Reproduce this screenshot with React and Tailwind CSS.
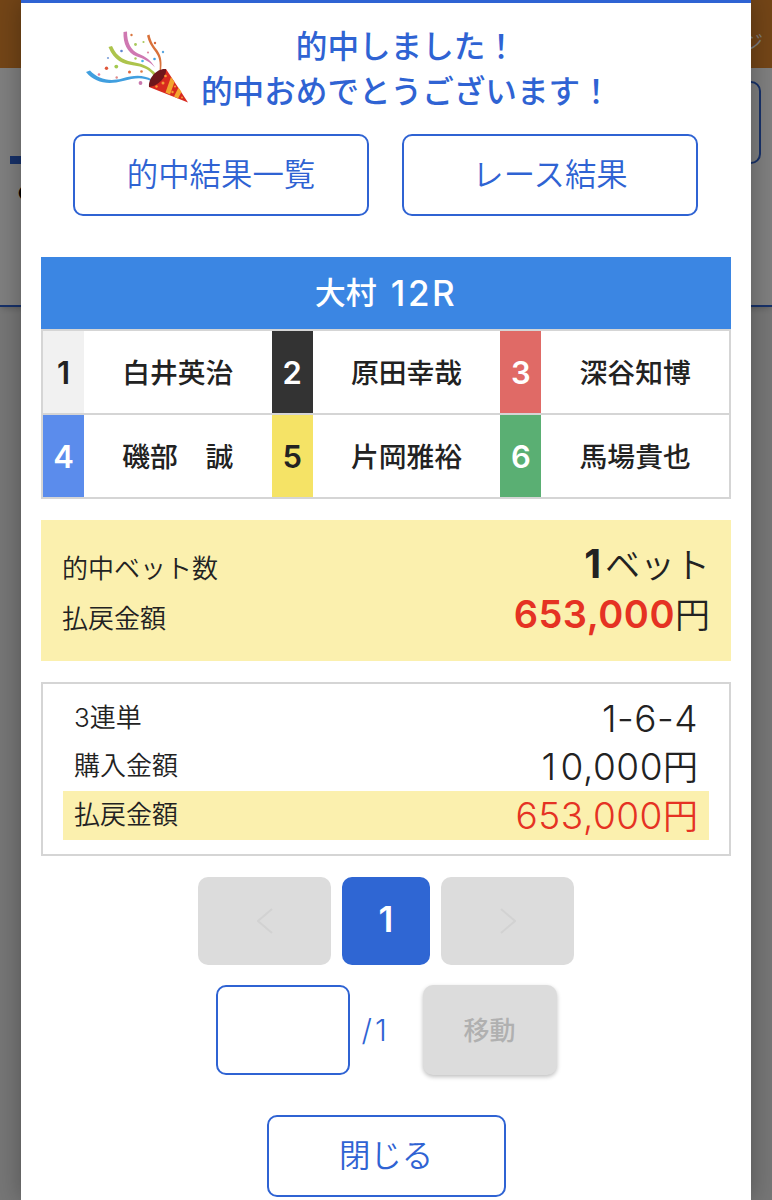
import React from "react";

const racers = [
  { no: 1, name: "白井英治", color: "bg-[#f1f1f1] text-[#222]" },
  { no: 2, name: "原田幸哉", color: "bg-[#333] text-white" },
  { no: 3, name: "深谷知博", color: "bg-[#e06a66] text-white" },
  { no: 4, name: "磯部　誠", color: "bg-[#5b8cec] text-white" },
  { no: 5, name: "片岡雅裕", color: "bg-[#f5e366] text-[#222]" },
  { no: 6, name: "馬場貴也", color: "bg-[#5aaf73] text-white" },
];

const confetti = [
  [51.5, 10, "#d9763f", 1.2],
  [55.5, 19.5, "#a9c95c", 1.4],
  [63.5, 17, "#a9c95c", 1.1],
  [75, 18, "#d8693f", 1.2],
  [41.5, 26, "#5f86d0", 1.3],
  [28, 33, "#7fa0da", 1.1],
  [68, 27.5, "#e08aa0", 1.1],
  [83, 27, "#5aa7e0", 1.2],
  [55.5, 33.5, "#a9c95c", 1.2],
  [62.5, 36, "#45b4ea", 1.3],
  [74.5, 34, "#45a0e0", 1.3],
  [26.5, 43.3, "#e0563a", 1.7],
  [36.3, 41.6, "#a3c94f", 1.9],
  [19, 49.5, "#e77f96", 1.3],
  [49.5, 47, "#e0663c", 1.5],
  [61.5, 46.5, "#dd7a45", 1.3],
  [36.7, 52.5, "#e08a8a", 1.2],
  [60.5, 58, "#c878ad", 1.9],
];

const Cracker = () => (
  <svg viewBox="0 0 115 85" className="h-[85px] w-[115px] shrink-0" fill="none">
    <path d="M6 47 L10 45.5 C18 54 29 57 42 53.5 C54 50 63 49.5 72 54.5 L71 56 C62 51.5 54 53 43 56 C28 60 15 58 6 47Z" fill="#419fdf" />
    <path d="M28.5 22 L32 21 C37 33 46 36 55 37.5 C64 39 71 43 76 49 L74 51 C69 44 62 41.5 54 40.5 C43 39 34 36 28.5 22Z" fill="#adc44c" />
    <path d="M43.5 7 L47 6.5 C47 18 51 25 58 28.5 C66 32 71 35 75 42.5 C70 37 65 34 57 31.5 C47 28 43 18 43.5 7Z" fill="#cf78b1" />
    <path d="M67 10.5 L69.5 9.5 C71 17 74 21 77.5 25.5 C82 32 82 38 81 46 L79.5 46 C80.5 37 79 32 75.5 27 C71 21 68.5 17 67 10.5Z" fill="#d8713a" />
    <path d="M69 62 C70 53 77 45 86 44 L108 77.5 Z" fill="#d8291f" />
    <path d="M85.5 67.5 L91 52 L94.5 57 L90 69.5Z M94 71.5 L98.5 62.5 L101.5 67 L98 73.5Z" fill="#f3a52f" />
    <path d="M69 62 C68 53 77 43 86 44 C87 52 78 61 69 62Z" fill="#6f151b" />
    <g fill="#f59a35">
      <circle cx="85.5" cy="51" r="1.3" />
      <circle cx="83" cy="58" r="1.5" />
      <circle cx="76.5" cy="61.5" r="1.2" />
      <circle cx="95" cy="61.5" r="1.1" />
      <circle cx="92.5" cy="67" r="1.2" />
      <circle cx="102" cy="72.5" r="1" />
    </g>
    {confetti.map(([x, y, color, r], index) => (
      <circle key={index} cx={x} cy={y} r={r} fill={color} />
    ))}
  </svg>
);

const Racer = ({ no, name, color }) => (
  <div className="flex border-b-2 border-[#d5d5d5] text-[27.8px] font-medium">
    <div className={`flex w-[41px] shrink-0 items-center justify-center pt-0.5 text-[31px] font-semibold ${color}`}>
      {no}
    </div>
    <div className="flex flex-1 items-center justify-center pt-1">{name}</div>
  </div>
);

const DetailRow = ({ label, className = "", children }) => (
  <div className={`flex h-[48.5px] items-center justify-between px-[11px] ${className}`}>
    <span className="pb-0.5 text-[26px] text-[#222]">{label}</span>
    <span className="text-[37px] leading-none tracking-[0.5px]">{children}</span>
  </div>
);

const Yen = () => <span className="text-[35px] tracking-normal">円</span>;

// Page that stays visible on both sides of the dialog
const Background = () => (
  <div className="h-full bg-[#ededed]">
    <div className="flex h-[68px] items-center justify-end bg-[#e68a2e] pt-[18px] pr-[9px] text-[20px] text-white">
      <span>マイページ</span>
    </div>
    <div className="h-[239px] border-b-2 border-[#2f63d3] bg-white pt-[13px] shadow-md">
      <div className="mr-[11px] ml-auto h-[83px] w-[296px] rounded-[10px] border-2 border-[#2f63d3]" />
      <div className="-mt-2 ml-[10px] h-2 w-20 bg-[#2f63d3]" />
      <div className="mt-[18px] ml-[17px] text-[22px] leading-none font-bold text-black">●</div>
    </div>
  </div>
);

const App = () => {
  return (
    <div className="relative h-[1200px] w-[772px] overflow-hidden font-['Inter','Noto_Sans_CJK_JP',sans-serif] font-[350] text-[#222]">
      <Background />
      <div className="absolute inset-0 bg-black/50" />

      <div className="absolute inset-y-0 left-[21px] w-[730px] border-t-3 border-[#2f63d3] bg-white px-5 shadow-[0_0_24px_rgba(0,0,0,0.3)]">
        <div className="mt-[22px] flex h-[85px] pl-[39px] text-[#2f63d3]">
          <Cracker />
          <h1 className="-mt-px ml-[6px] text-center text-[31.6px] leading-[45px] font-medium whitespace-nowrap">
            的中しました！
            <br />
            的中おめでとうございます！
          </h1>
        </div>

        <div className="mt-6 flex justify-center gap-[33px] pr-px text-[31.4px] text-[#2f63d3]">
          <button className="h-[82px] w-[296px] rounded-[10px] border-2 border-[#2f63d3] pt-0.5">的中結果一覧</button>
          <button className="h-[82px] w-[296px] rounded-[10px] border-2 border-[#2f63d3] pt-0.5">レース結果</button>
        </div>

        <div className="mt-[41px] flex h-[72px] items-center justify-center gap-[14px] bg-[#3b86e3] text-[31px] font-medium text-white">
          <span>大村</span>
          <span className="text-[35px] tracking-[2.5px]">12R</span>
        </div>
        <div className="grid h-[170px] grid-cols-3 grid-rows-2 border-x-2 border-t-2 border-[#d5d5d5]">
          {racers.map((racer) => (
            <Racer key={racer.no} {...racer} />
          ))}
        </div>

        <div className="mt-[21px] h-[141px] bg-[#fbf0ae] px-[21px] pt-5">
          <div className="flex h-[50px] items-center justify-between">
            <span className="pt-1.5 text-[26px]">的中ベット数</span>
            <span className="pb-1 text-[35px] leading-none">
              <b className="mr-1 text-[39px] font-bold">1</b>ベット
            </span>
          </div>
          <div className="flex h-[50px] items-center justify-between">
            <span className="pt-1.5 text-[26px]">払戻金額</span>
            <span className="pb-0.5 text-[35px] leading-none">
              <b className="text-[38px] font-semibold tracking-[0.5px] text-[#e53223]">653,000</b>円
            </span>
          </div>
        </div>

        <div className="mt-[21px] h-[174px] border-2 border-[#d5d5d5] px-5 pt-[10px]">
          <DetailRow label="3連単">1-6-4</DetailRow>
          <DetailRow label="購入金額">
            1<span className="ml-1">0,000</span>
            <Yen />
          </DetailRow>
          <DetailRow label="払戻金額" className="bg-[#fbf0ae] text-[#e53223]">
            653,000
            <Yen />
          </DetailRow>
        </div>

        <div className="mt-[21px] flex justify-center gap-[11px]">
          <button className="flex h-[88px] w-[133px] items-center justify-center rounded-[10px] bg-[#dcdcdc]">
            <svg width="16" height="26" viewBox="0 0 16 26" fill="none" stroke="#d2d2d2" strokeWidth="2">
              <path d="M15 1 L1 13 L15 25" />
            </svg>
          </button>
          <button className="h-[88px] w-[88px] rounded-[10px] bg-[#2f66d3] pb-1 text-[35px] font-semibold text-white">
            1
          </button>
          <button className="flex h-[88px] w-[133px] items-center justify-center rounded-[10px] bg-[#dcdcdc]">
            <svg width="16" height="26" viewBox="0 0 16 26" fill="none" stroke="#d2d2d2" strokeWidth="2">
              <path d="M1 1 L15 13 L1 25" />
            </svg>
          </button>
        </div>

        <div className="mt-5 flex items-center justify-center">
          <input className="h-[90px] w-[134px] rounded-[10px] border-2 border-[#2f63d3]" />
          <span className="w-[73px] pl-3 text-[30px] tracking-[3px] text-[#2f63d3]">/1</span>
          <button className="h-[90px] w-[134px] rounded-[10px] bg-[#dcdcdc] text-[26px] font-medium text-[#b0b0b0] shadow-[0_2px_4px_rgba(0,0,0,0.25)]">
            移動
          </button>
        </div>

        <div className="mt-10 flex justify-center">
          <button className="h-[82px] w-[239px] rounded-[10px] border-2 border-[#2f63d3] pt-0.5 text-[31.4px] text-[#2f63d3]">
            閉じる
          </button>
        </div>
      </div>
    </div>
  );
};

export default App;
